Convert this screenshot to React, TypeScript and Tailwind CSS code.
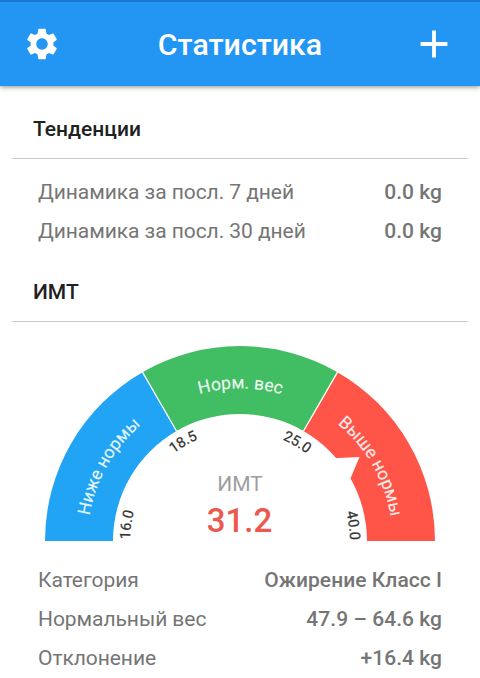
import React from 'react';
import { MdAdd, MdSettings } from 'react-icons/md';

interface Row {
  label: string;
  value: string;
}

const trends: Row[] = [
  { label: 'Динамика за посл. 7 дней', value: '0.0 kg' },
  { label: 'Динамика за посл. 30 дней', value: '0.0 kg' },
];

const details: Row[] = [
  { label: 'Категория', value: 'Ожирение Класс I' },
  { label: 'Нормальный вес', value: '47.9 – 64.6 kg' },
  { label: 'Отклонение', value: '+16.4 kg' },
];

const SectionTitle: React.FC<{ title: string }> = ({ title }) => (
  <h2 className="mx-3 h-[42px] border-b border-[#c8c8c8] pl-[21px] text-[21px] font-medium leading-[24px] text-[#212121]">
    {title}
  </h2>
);

const RowList: React.FC<{ rows: Row[] }> = ({ rows }) => (
  <dl className="px-[38px] text-[21px] leading-[39px] text-[#757575]">
    {rows.map((row) => (
      <div key={row.label} className="flex justify-between whitespace-nowrap">
        <dt className="tracking-[-0.06px]">{row.label}</dt>
        <dd className="font-medium tracking-[0.04px]">{row.value}</dd>
      </div>
    ))}
  </dl>
);

const BmiGauge: React.FC = () => (
  <svg viewBox="0 0 480 219" className="block h-[219px] w-[480px]">
    <defs>
      <path id="label-arc" d="M87.500 219 A152.500 152.500 0 0 1 392.500 219" />
      <path id="scale-arc" d="M130 219 A110 110 0 0 1 350 219" />
    </defs>

    {/* Zones */}
    <path d="M45 219 A195 195 0 0 1 142.500 50.125 L176.500 109.015 A127 127 0 0 0 113 219 Z" fill="#20a4f3" />
    <path d="M142.500 50.125 A195 195 0 0 1 337.500 50.125 L303.500 109.015 A127 127 0 0 0 176.500 109.015 Z" fill="#41bd64" />
    <path d="M337.500 50.125 A195 195 0 0 1 435 219 L367 219 A127 127 0 0 0 303.500 109.015 Z" fill="#ff5549" />
    <path d="M142.500 50.125 L176.500 109.015 M337.500 50.125 L303.500 109.015" stroke="#fff" strokeWidth="1.3" />

    {/* Pointer */}
    <path d="M333 136.200 L359.500 135 L350 157.500 Z" fill="#fff" />

    <g fill="#fff" fillOpacity="0.9" fontSize="17.600" textAnchor="middle" stroke="#fff" strokeOpacity="0.5" strokeWidth="0.250">
      <text><textPath href="#label-arc" startOffset="16.400%">Ниже нормы</textPath></text>
      <text><textPath href="#label-arc" startOffset="50.100%">Норм. вес</textPath></text>
      <text><textPath href="#label-arc" startOffset="83.500%">Выше нормы</textPath></text>
    </g>

    <g fill="#333" fontSize="14.500" stroke="#333" strokeWidth="0.250">
      <text><textPath href="#scale-arc" startOffset="0.500%">16.0</textPath></text>
      <text textAnchor="middle"><textPath href="#scale-arc" startOffset="33.400%">18.5</textPath></text>
      <text textAnchor="middle"><textPath href="#scale-arc" startOffset="66.700%">25.0</textPath></text>
      <text textAnchor="end"><textPath href="#scale-arc" startOffset="99.700%">40.0</textPath></text>
    </g>

    <text x="240" y="169" textAnchor="middle" fontSize="21" fill="#9e9e9e">ИМТ</text>
    <text x="239.500" y="210" textAnchor="middle" fontSize="33" fontWeight="500" fill="#ed574e">31.2</text>
  </svg>
);

const App: React.FC = () => {
  return (
    <div className="h-[678px] w-[480px] overflow-hidden bg-white font-['Roboto',sans-serif]">
      {/* Header */}
      <header className="flex h-[86px] items-center justify-between border-t-2 border-[#1976d2] bg-[#2396f3] pl-[23px] pr-[23px] text-white shadow-[0_1px_5px_rgba(0,0,0,0.45)]">
        <button aria-label="Настройки">
          <MdSettings className="size-[38px]" />
        </button>
        <h1 className="pl-[8px] pt-[2px] text-[30.300px] font-medium leading-[36px]">Статистика</h1>
        <button aria-label="Добавить">
          <MdAdd className="size-[46px]" />
        </button>
      </header>

      <main>
        {/* Trends */}
        <section className="pt-[31px]">
          <SectionTitle title="Тенденции" />
          <div className="pt-[14px]">
            <RowList rows={trends} />
          </div>
        </section>

        {/* BMI */}
        <section className="pt-[29px]">
          <SectionTitle title="ИМТ" />
          <BmiGauge />
          <div className="pt-5">
            <RowList rows={details} />
          </div>
        </section>
      </main>
    </div>
  );
};

export default App;
